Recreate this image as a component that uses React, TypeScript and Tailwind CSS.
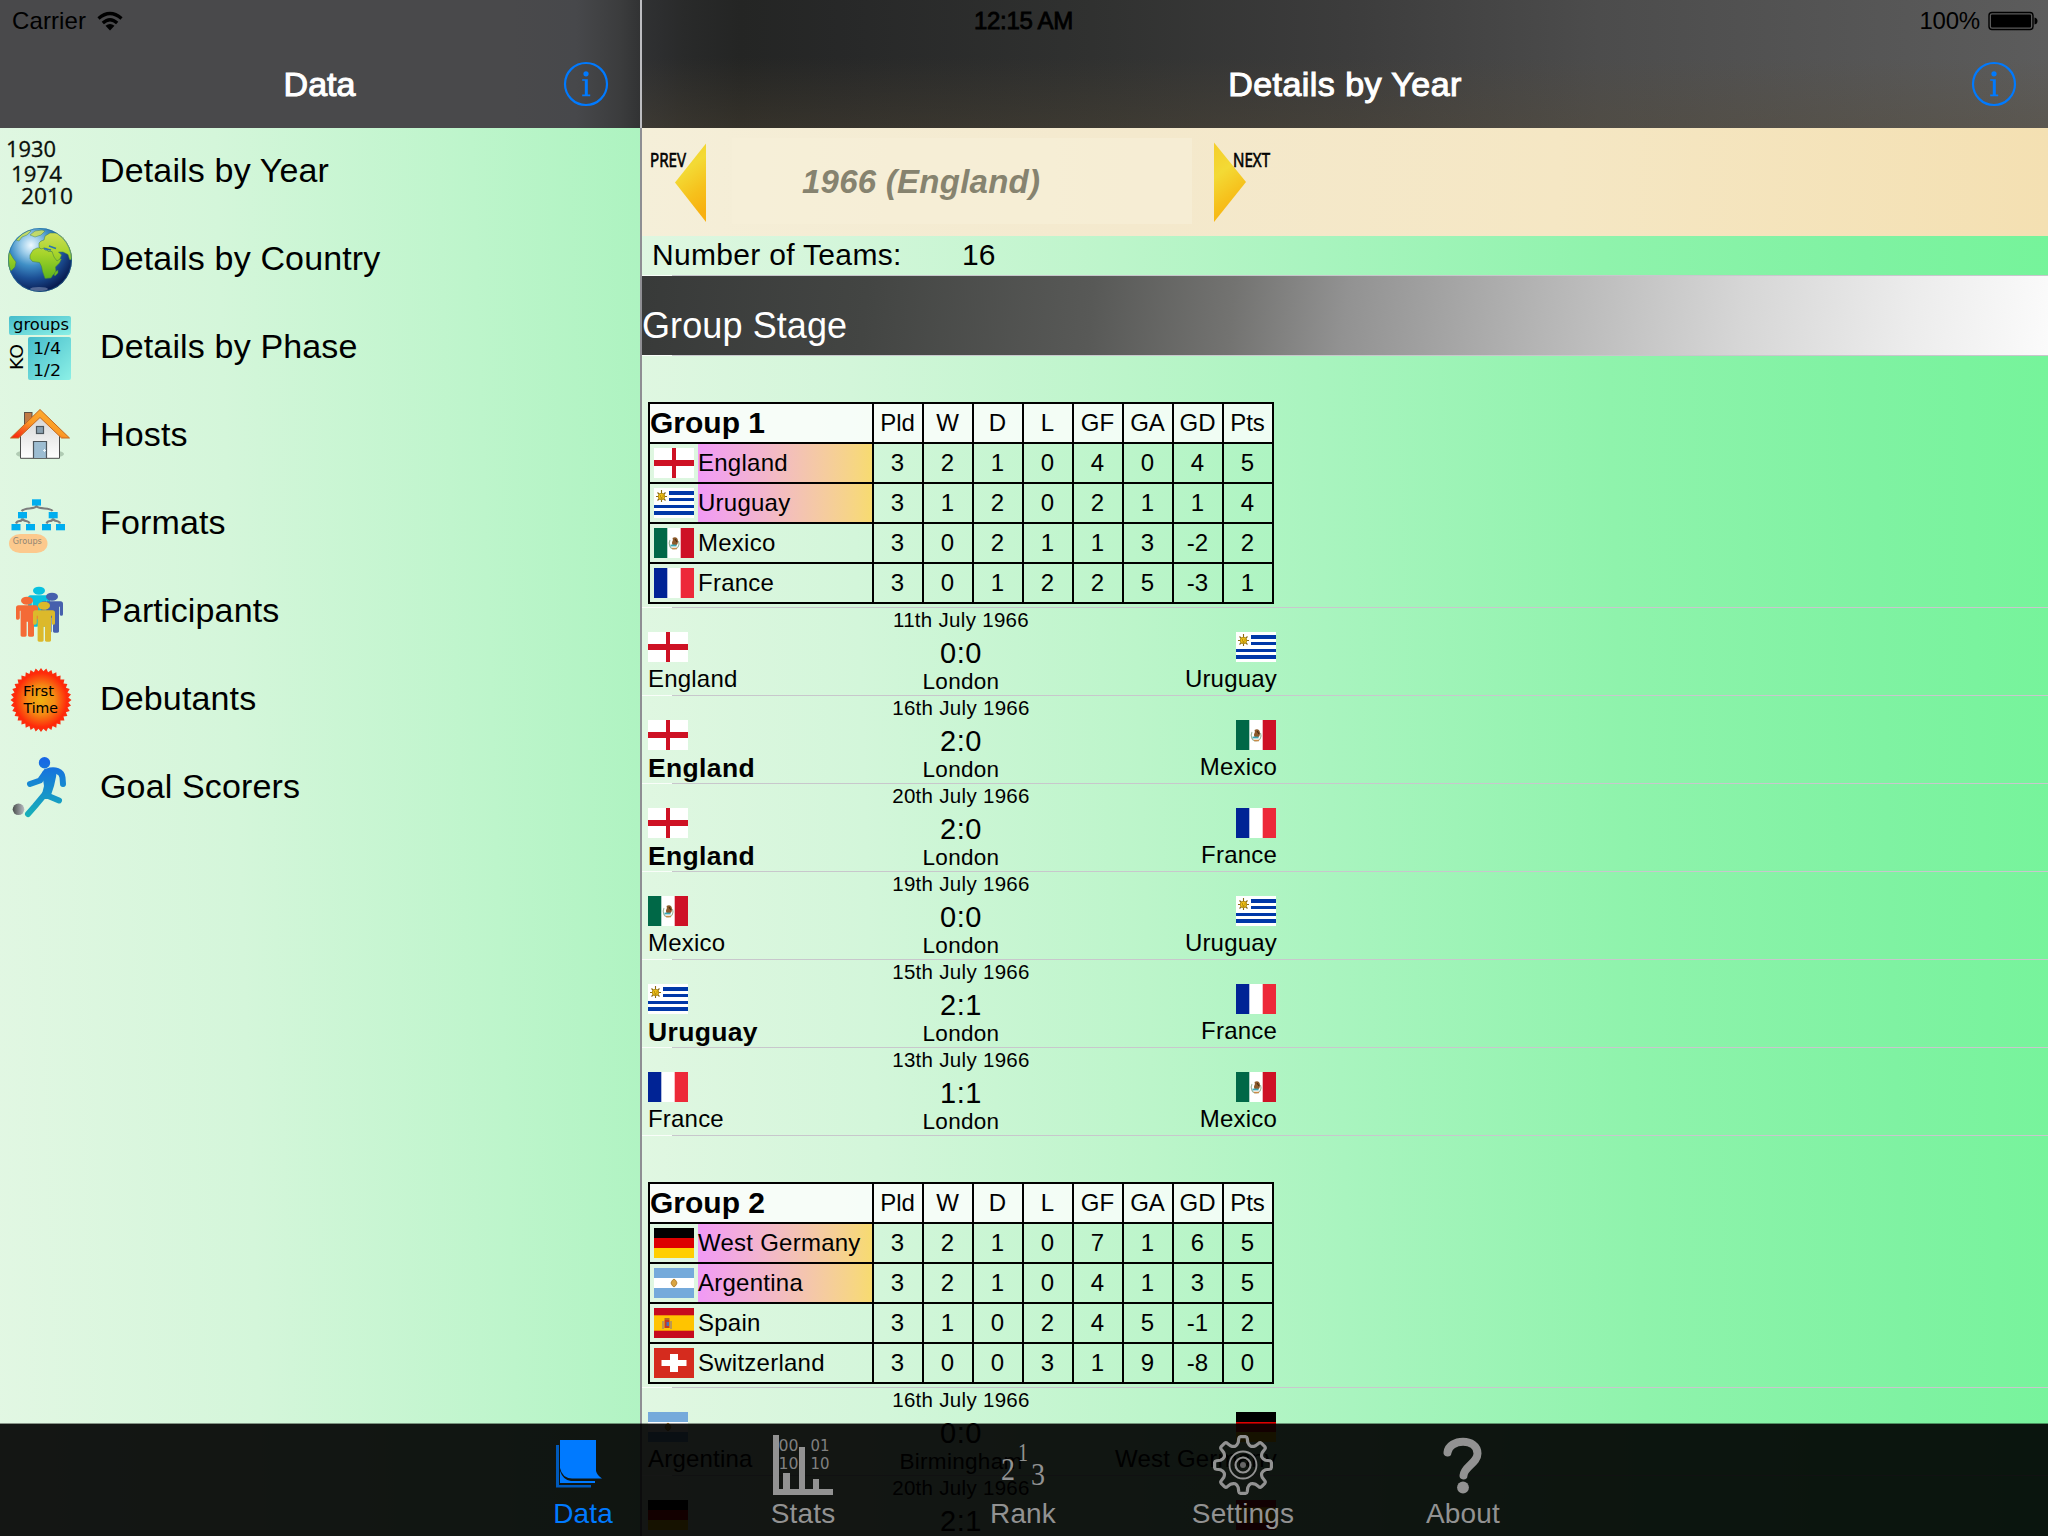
import React from "react";

type Country =
  | "England" | "Uruguay" | "Mexico" | "France"
  | "West Germany" | "Argentina" | "Spain" | "Switzerland";

function Flag({ country }: { country: Country }) {
  return (
    <svg viewBox="0 0 40 30" className="block h-[30px] w-10 shrink-0">
      {country === "England" && (
        <>
          <rect width="40" height="30" fill="#fff" />
          <rect y="12" width="40" height="6" fill="#ce1124" />
          <rect x="18" width="4" height="30" fill="#ce1124" />
        </>
      )}
      {country === "Uruguay" && (
        <>
          <rect width="40" height="30" fill="#fff" />
          <rect x="15" y="3" width="25" height="4" fill="#0038a8" />
          <rect x="15" y="10" width="25" height="3" fill="#0038a8" />
          <rect y="17" width="40" height="3" fill="#0038a8" />
          <rect y="23" width="40" height="4" fill="#0038a8" />
          <path d="M7.500 2v12M2 8.500h11M3.500 4.500l8 8M11.500 4.500l-8 8" stroke="#8a6a10" strokeWidth="1.100" />
          <circle cx="7.500" cy="8.500" r="3.300" fill="#f0c015" stroke="#9a7608" strokeWidth=".7" />
          <path d="M6 8h1M8.500 8h1M6.500 10h2" stroke="#6b4e05" strokeWidth=".8" />
        </>
      )}
      {country === "Mexico" && (
        <>
          <rect width="40" height="30" fill="#fff" />
          <rect width="13.300" height="30" fill="#006847" />
          <rect x="26.700" width="13.300" height="30" fill="#ce1126" />
          <path d="M18.500 10c3-2 5.500 0 5.500 3s-1 4-3 5c-2 0-3-1-3-3s1.500-2 .5-5z" fill="#8c5a2b" />
          <path d="M16 12c-2 4 0 9 4 9s6-4 4.500-8" stroke="#9db59a" strokeWidth="1.100" fill="none" />
          <path d="M16.500 17.500h6" stroke="#3aa7b5" strokeWidth="1.800" />
          <path d="M18 20.500h5" stroke="#c98b4a" strokeWidth="1.500" />
          <path d="M21 11l2 3" stroke="#4a2a12" strokeWidth="1.200" />
        </>
      )}
      {country === "France" && (
        <>
          <rect width="40" height="30" fill="#fff" />
          <rect width="13.300" height="30" fill="#002395" />
          <rect x="26.700" width="13.300" height="30" fill="#ed2939" />
        </>
      )}
      {country === "West Germany" && (
        <>
          <rect width="40" height="10" fill="#000" />
          <rect y="10" width="40" height="10" fill="#d00" />
          <rect y="20" width="40" height="10" fill="#ffce00" />
        </>
      )}
      {country === "Argentina" && (
        <>
          <rect width="40" height="30" fill="#75aadb" />
          <rect y="10" width="40" height="10" fill="#fff" />
          <path d="M20 11l1.800 1.500 1.200 2.500-1.200 2.500-1.800 1.500-1.800-1.500-1.200-2.500 1.200-2.500z" fill="#d9a441" stroke="#a8741f" strokeWidth=".8" />
        </>
      )}
      {country === "Spain" && (
        <>
          <rect width="40" height="30" fill="#c60b1e" />
          <rect y="7.300" width="40" height="15.400" fill="#ffc400" />
          <rect x="10.500" y="12" width="5" height="8" fill="#c0392b" />
          <rect x="12.500" y="14" width="2.500" height="4" fill="#4b6fb5" />
          <path d="M9 13v8M17 13v8" stroke="#a98a6a" strokeWidth="1.500" />
          <path d="M10.500 11h5" stroke="#a0522d" strokeWidth="1.600" />
        </>
      )}
      {country === "Switzerland" && (
        <>
          <rect width="40" height="30" fill="#d52b1e" />
          <rect x="16" y="6" width="8" height="18" fill="#fff" />
          <rect x="7.500" y="12" width="25" height="6" fill="#fff" />
        </>
      )}
    </svg>
  );
}

function InfoIcon() {
  return (
    <svg viewBox="0 0 46 46" className="block size-[46px]" fill="none">
      <circle cx="23" cy="23" r="21" stroke="#007aff" strokeWidth="2.200" />
      <circle cx="23" cy="12.800" r="2.600" fill="#007aff" />
      <path d="M19.200 18.200h5.600v15.400h2.400v1.600h-8v-1.600h2.600V19.800h-2.600z" fill="#007aff" />
    </svg>
  );
}

const rowIcon = "block h-[88px] w-20 shrink-0";

function YearsIcon() {
  return (
    <svg viewBox="0 0 80 88" className={rowIcon} fontFamily="'Open Sans', sans-serif" fontSize="22" fill="#0a0f0a" stroke="#0a0f0a" strokeWidth=".3">
      <text x="6" y="29" textLength="50" lengthAdjust="spacingAndGlyphs">1930</text>
      <text x="11" y="54" textLength="51" lengthAdjust="spacingAndGlyphs">1974</text>
      <text x="21" y="76" textLength="52" lengthAdjust="spacingAndGlyphs">2010</text>
    </svg>
  );
}

function GlobeIcon() {
  return (
    <svg viewBox="0 0 80 88" className={rowIcon}>
      <defs>
        <radialGradient id="sea" cx=".36" cy=".27" r=".76">
          <stop offset="0" stopColor="#eef9ff" />
          <stop offset=".2" stopColor="#9dcdea" />
          <stop offset=".42" stopColor="#3f8fc6" />
          <stop offset=".68" stopColor="#1c4f95" />
          <stop offset="1" stopColor="#06164a" />
        </radialGradient>
        <linearGradient id="land" gradientUnits="userSpaceOnUse" x1="0" y1="14" x2="0" y2="62">
          <stop offset="0" stopColor="#d3e05c" />
          <stop offset=".5" stopColor="#a6d42a" />
          <stop offset="1" stopColor="#5fb51c" />
        </linearGradient>
        <clipPath id="ball"><circle cx="40" cy="44" r="32" /></clipPath>
      </defs>
      <circle cx="40" cy="44" r="32" fill="url(#sea)" />
      <g clipPath="url(#ball)" fill="url(#land)" stroke="#3f7a4a" strokeWidth=".5">
        <path d="M30 39l3-5 4-2 6-.5 2 2.500 7 1 3 5 2 3 4.500 0-2 4-4 4 .5 5-3 3-2 3-6 .5-2.500-7-1-5-2-4-7-1-2.500-3z" />
        <path d="M39 27l2-2 3-1 1-4 5-3 8 0 8 6 5 8 1.500 8-1 5-2-.5-1.500-5-5-2.500-4.500 0 3 3-1.500 4-3 2-3-4-2-5.500-4 0-1-3-3-.5-3 1-2-2z" />
        <path d="M8 34l2 3 3 5 3 4-1 5-4 4-3-2z" />
        <path d="M16 24l6-6 7-4 2 1-4 4-5 2-3 4z" opacity=".85" />
        <path d="M30 19l5-4 7-1 3 1-4 4-6 2z" opacity=".85" />
        <path d="M54 59l1-3 3-2 0 3-3 3z" />
      </g>
      <path d="M44 32.500l7 1.500M49 30l7 2.500" stroke="#2d75ad" strokeWidth="1.600" />
      <ellipse cx="39" cy="73" rx="9" ry="2" fill="#8c9cc0" opacity=".55" />
      <circle cx="40" cy="44" r="31.500" fill="none" stroke="#1f6f9c" strokeWidth="1" opacity=".6" />
    </svg>
  );
}

function PhaseIcon() {
  return (
    <svg viewBox="0 0 80 88" className={rowIcon} fontFamily="'DejaVu Sans', sans-serif" fontSize="16">
      <defs>
        <linearGradient id="teal" x1="0" y1="0" x2="1" y2="1">
          <stop offset="0" stopColor="#45bccb" />
          <stop offset="1" stopColor="#8cf0e6" />
        </linearGradient>
      </defs>
      <rect x="9" y="12" width="62" height="19" rx="2" fill="url(#teal)" />
      <rect x="28" y="33" width="43" height="43" rx="2" fill="url(#teal)" />
      <text x="13" y="25.500" textLength="56" lengthAdjust="spacingAndGlyphs">groups</text>
      <text x="33" y="50" textLength="28" lengthAdjust="spacingAndGlyphs">1/4</text>
      <text x="33" y="72" textLength="28" lengthAdjust="spacingAndGlyphs">1/2</text>
      <text transform="translate(23 66) rotate(-90)" fontSize="18" textLength="26" lengthAdjust="spacingAndGlyphs">KO</text>
    </svg>
  );
}

function HouseIcon() {
  return (
    <svg viewBox="0 0 80 88" className={rowIcon}>
      <defs>
        <linearGradient id="roof" x1="0" y1="1" x2=".8" y2="0">
          <stop offset="0" stopColor="#ff1a08" />
          <stop offset=".22" stopColor="#f6501d" />
          <stop offset=".5" stopColor="#fb9a26" />
          <stop offset="1" stopColor="#ffb02e" />
        </linearGradient>
        <linearGradient id="wall" x1="0" y1="0" x2="0" y2="1">
          <stop offset="0" stopColor="#d4d4d4" />
          <stop offset="1" stopColor="#ffffff" />
        </linearGradient>
      </defs>
      <ellipse cx="40" cy="62" rx="24" ry="5" fill="#5c7c62" opacity=".35" />
      <rect x="24.500" y="20.500" width="7.500" height="14" fill="#c17a45" stroke="#5f5145" />
      <path d="M20.500 66.300V42L40 23l19.500 19v24.300z" fill="url(#wall)" stroke="#4c4c4c" />
      <path d="M10.500 46L40 17.500 69.500 46h-8L40 25.500 18.500 46z" fill="url(#roof)" stroke="#c56a20" strokeWidth="1" strokeLinejoin="round" />
      <rect x="36.500" y="34.500" width="7" height="7" fill="#8aa0b0" stroke="#4c555c" strokeWidth="1.200" />
      <path d="M33.500 66V49.500h13V66" fill="#9dbdd2" stroke="#4c555c" strokeWidth="1.200" />
      <path d="M44.500 57v3M43 58.500h3" stroke="#eaf4fa" />
    </svg>
  );
}

function FormatsIcon() {
  const boxes = [[32, 19.300, 9], [18, 32, 9], [48.700, 32, 9], [11.500, 44, 9], [26, 44, 9], [42, 44, 9], [56, 44, 9]];
  return (
    <svg viewBox="0 0 80 88" className={rowIcon}>
      <path d="M21.500 31q2-2 8-2.500t7-2.500q1 2 8 2.500t8 2.500M16 43.500q1-2.500 3.500-2.500t3-2.500q.5 2 3.500 2.500t3.500 2.500M46.500 43.500q1-2.500 3.500-2.500t3-2.500q.5 2 3.500 2.500t3.500 2.500" fill="none" stroke="#7d7d7d" strokeWidth="2.200" />
      {boxes.map(([x, y, w], i) => (
        <rect key={i} x={x} y={y} width={w} height="6.300" fill="#00aeef" />
      ))}
      <rect x="9" y="54" width="38.500" height="19" rx="11" ry="9.500" fill="#fcc98d" />
      <text x="12.800" y="63.500" fontSize="8" fill="#8f8574" fontFamily="'DejaVu Sans', sans-serif" textLength="29" lengthAdjust="spacingAndGlyphs">Groups</text>
    </svg>
  );
}

function Person({ x, y, fill }: { x: number; y: number; fill: string }) {
  return (
    <g transform={`translate(${x} ${y})`} fill={fill}>
      <ellipse cx="11" cy="0" rx="6" ry="4" />
      <path d="M2.500 4.500h17q2.500 0 2.500 2.500v10.500q0 1.500-1.600 1.500t-1.600-1.500V10h-.8v24.500q0 1.500-3 1.500t-3-1.500V21h-1.400v13.500q0 1.500-3 1.500t-3-1.500V10h-.8v7.500Q3.200 19 1.600 19T0 17.500V7q0-2.500 2.500-2.500z" />
    </g>
  );
}

function PeopleIcon() {
  return (
    <svg viewBox="0 0 80 88" className={rowIcon}>
      <Person x={28} y={22.700} fill="#08c2e0" />
      <Person x={41} y={28.700} fill="#4660ad" />
      <Person x={16} y={32.700} fill="#f46a36" />
      <Person x={33} y={37.700} fill="#dcb92b" />
    </svg>
  );
}

function BurstIcon() {
  const n = 36;
  const points = Array.from({ length: n * 2 }, (_, i) => {
    const k = i % 2 ? 0.9 : 1;
    const a = (i * Math.PI) / n;
    return `${(41 + 30.500 * k * Math.sin(a)).toFixed(1)},${(44 - 32 * k * Math.cos(a)).toFixed(1)}`;
  }).join(" ");
  return (
    <svg viewBox="0 0 80 88" className={rowIcon} fontFamily="'DejaVu Sans', sans-serif" fontSize="14">
      <defs>
        <radialGradient id="burst">
          <stop offset="0" stopColor="#f0b012" />
          <stop offset=".45" stopColor="#f48a14" />
          <stop offset=".85" stopColor="#ff2a0a" />
          <stop offset="1" stopColor="#f83010" />
        </radialGradient>
      </defs>
      <polygon points={points} fill="url(#burst)" />
      <text x="23" y="40" textLength="31" lengthAdjust="spacingAndGlyphs">First</text>
      <text x="23.500" y="57" textLength="34.500" lengthAdjust="spacingAndGlyphs">Time</text>
    </svg>
  );
}

function PlayerIcon() {
  return (
    <svg viewBox="0 0 80 88" className={rowIcon}>
      <defs>
        <linearGradient id="kit" gradientUnits="userSpaceOnUse" x1="0" y1="14" x2="0" y2="72">
          <stop offset="0" stopColor="#1766e6" />
          <stop offset="1" stopColor="#17b0b8" />
        </linearGradient>
        <linearGradient id="football">
          <stop offset="0" stopColor="#4a4f4d" />
          <stop offset="1" stopColor="#b9bcc2" />
        </linearGradient>
      </defs>
      <circle cx="44.500" cy="18.700" r="5.700" fill="url(#kit)" />
      <g fill="none" stroke="url(#kit)" strokeWidth="6" strokeLinecap="round" strokeLinejoin="round">
        <path d="M47 27.500c8-3 15 0 15.500 6l.5 6.500" />
        <path d="M46 28l-6 8.500-10 3.500" />
        <path d="M46 51l13 5.500" />
        <path d="M45 50L35 62 28 70" />
      </g>
      <path d="M42 28l6-3h9l-1 8-2 9-3 9-3 4-5 0-1-5 2-8z" fill="url(#kit)" />
      <circle cx="18.500" cy="65.300" r="5.800" fill="url(#football)" />
    </svg>
  );
}

const menu = [
  { label: "Details by Year", Icon: YearsIcon },
  { label: "Details by Country", Icon: GlobeIcon },
  { label: "Details by Phase", Icon: PhaseIcon },
  { label: "Hosts", Icon: HouseIcon },
  { label: "Formats", Icon: FormatsIcon },
  { label: "Participants", Icon: PeopleIcon },
  { label: "Debutants", Icon: BurstIcon },
  { label: "Goal Scorers", Icon: PlayerIcon },
];

type Standing = [Country, number[], boolean];
const group1: Standing[] = [
  ["England", [3, 2, 1, 0, 4, 0, 4, 5], true],
  ["Uruguay", [3, 1, 2, 0, 2, 1, 1, 4], true],
  ["Mexico", [3, 0, 2, 1, 1, 3, -2, 2], false],
  ["France", [3, 0, 1, 2, 2, 5, -3, 1], false],
];
const group2: Standing[] = [
  ["West Germany", [3, 2, 1, 0, 7, 1, 6, 5], true],
  ["Argentina", [3, 2, 1, 0, 4, 1, 3, 5], true],
  ["Spain", [3, 1, 0, 2, 4, 5, -1, 2], false],
  ["Switzerland", [3, 0, 0, 3, 1, 9, -8, 0], false],
];

function Separator() {
  return (
    <div className="flex h-px shrink-0">
      <div className="w-[30px] bg-white/80" />
      <div className="grow bg-[#c8c7cc]" />
    </div>
  );
}

function GroupTable({ name, rows }: { name: string; rows: Standing[] }) {
  return (
    <>
      <div className="flex h-[251px] shrink-0 flex-col pl-[6px] pt-[46px]">
        <div className="w-[626px] border-2 border-black text-[24px]">
          <div className="grid h-[38px] grid-cols-[222px_repeat(8,1fr)] bg-white/80 leading-[38px]">
            <div className="text-[30px] font-bold">{name}</div>
            {["Pld", "W", "D", "L", "GF", "GA", "GD", "Pts"].map((h) => (
              <div key={h} className="border-l-2 border-black pr-px text-center">{h}</div>
            ))}
          </div>
          {rows.map(([country, values, through]) => (
            <div key={country} className="grid h-10 grid-cols-[222px_repeat(8,1fr)] border-t-2 border-black leading-[38px]">
              <div className="flex tracking-[0.25px]">
                <div className="flex w-12 items-center pl-1"><Flag country={country} /></div>
                <div className={through ? "grow whitespace-nowrap bg-linear-to-r from-[#f199f6] to-[#f7db70]" : "grow whitespace-nowrap"}>
                  {country}
                </div>
              </div>
              {values.map((v, i) => (
                <div key={i} className="border-l-2 border-black pr-px text-center">{v}</div>
              ))}
            </div>
          ))}
        </div>
      </div>
      <Separator />
    </>
  );
}

function Team({ country, winner, right }: { country: Country; winner?: boolean; right?: boolean }) {
  return (
    <div className={right ? "flex w-[200px] flex-col items-end pr-[5px] pt-6" : "flex w-[200px] flex-col items-start pl-[6px] pt-6"}>
      <div className={right ? "pr-px" : ""}><Flag country={country} /></div>
      {winner ? (
        <div className="mt-1 h-[29px] overflow-hidden whitespace-nowrap text-[26.5px] font-bold leading-[28px] tracking-[0.35px]">{country}</div>
      ) : (
        <div className="mt-[3px] whitespace-nowrap text-[24px] leading-7 tracking-[0.2px]">{country}</div>
      )}
    </div>
  );
}

type MatchData = { date: string; home: Country; away: Country; score: string; city: string };

function Match({ date, home, away, score, city }: MatchData) {
  const [a, b] = score.split(":").map(Number);
  return (
    <>
      <div className="flex h-[87px] w-[640px] shrink-0 justify-between">
        <Team country={home} winner={a > b} />
        <div className="flex flex-col items-center pr-[2px]">
          <div className="text-[20.5px] leading-6 tracking-[0.3px]">{date}</div>
          <div className="mt-[6px] text-[29px] leading-[30px] tracking-[0.5px]">{score}</div>
          <div className="mt-[2px] text-[22.5px] leading-6 tracking-[0.3px]">{city}</div>
        </div>
        <Team country={away} winner={b > a} right />
      </div>
      <Separator />
    </>
  );
}

const matches1: MatchData[] = [
  { date: "11th July 1966", home: "England", away: "Uruguay", score: "0:0", city: "London" },
  { date: "16th July 1966", home: "England", away: "Mexico", score: "2:0", city: "London" },
  { date: "20th July 1966", home: "England", away: "France", score: "2:0", city: "London" },
  { date: "19th July 1966", home: "Mexico", away: "Uruguay", score: "0:0", city: "London" },
  { date: "15th July 1966", home: "Uruguay", away: "France", score: "2:1", city: "London" },
  { date: "13th July 1966", home: "France", away: "Mexico", score: "1:1", city: "London" },
];
const matches2: MatchData[] = [
  { date: "16th July 1966", home: "Argentina", away: "West Germany", score: "0:0", city: "Birmingham" },
  { date: "20th July 1966", home: "West Germany", away: "Spain", score: "2:1", city: "Birmingham" },
];

function ArrowLabel({ next }: { next?: boolean }) {
  const id = next ? "goldNext" : "goldPrev";
  return (
    <svg viewBox="0 0 60 84" className="block h-[84px] w-[60px] shrink-0" fontFamily="'Open Sans', sans-serif" fontSize="19.500" stroke="none">
      <defs>
        <linearGradient id={id} x1=".2" y1="0" x2=".5" y2="1">
          <stop offset="0" stopColor="#f5cf2b" />
          <stop offset=".35" stopColor="#f3da35" />
          <stop offset=".7" stopColor="#f6c11c" />
          <stop offset="1" stopColor="#f8b010" />
        </linearGradient>
      </defs>
      {next ? (
        <>
          <path d="M0 1.500L32 41 0 81z" fill={`url(#${id})`} />
          <text x="19" y="26" textLength="37" lengthAdjust="spacingAndGlyphs" stroke="#000" strokeWidth=".7">NEXT</text>
        </>
      ) : (
        <>
          <path d="M56 2.500L25 41.500 56 81z" fill={`url(#${id})`} />
          <text x="0" y="26" textLength="36" lengthAdjust="spacingAndGlyphs" stroke="#000" strokeWidth=".7">PREV</text>
        </>
      )}
    </svg>
  );
}

function DataIcon() {
  return (
    <svg viewBox="0 0 60 60" className="block size-[60px]">
      <path d="M3 10h3v40h32v2.500H3z" fill="#0059ba" />
      <path d="M7 36v12h35v-2H18q-8-1-11-10z" fill="#007aff" />
      <path d="M7 5h36v31q1 4 6 7.500H19Q9 43 7 33z" fill="#007aff" />
    </svg>
  );
}

function StatsIcon() {
  return (
    <svg viewBox="0 0 60 60" className="block size-[60px]" fill="#929292" fontFamily="'DejaVu Sans', sans-serif" fontSize="16">
      <path d="M0 0h6v54h54v6H0z" />
      <rect x="10" y="38" width="7" height="17" />
      <rect x="26" y="12" width="6" height="43" />
      <rect x="40" y="44" width="6" height="11" />
      <g fill="#808080">
        <text x="5.500" y="16" textLength="20" lengthAdjust="spacingAndGlyphs">00</text>
        <text x="5.500" y="34" textLength="20" lengthAdjust="spacingAndGlyphs">10</text>
        <text x="37.500" y="16" textLength="19" lengthAdjust="spacingAndGlyphs">01</text>
        <text x="37.500" y="34" textLength="19" lengthAdjust="spacingAndGlyphs">10</text>
      </g>
    </svg>
  );
}

function RankIcon() {
  return (
    <svg viewBox="0 0 60 60" className="block size-[60px]" fill="#929292" fontFamily="'Liberation Serif', serif">
      <text x="8" y="45" fontSize="31" textLength="14" lengthAdjust="spacingAndGlyphs">2</text>
      <text x="25" y="26" fontSize="26" textLength="10" lengthAdjust="spacingAndGlyphs">1</text>
      <text x="38" y="50" fontSize="31" textLength="14" lengthAdjust="spacingAndGlyphs">3</text>
    </svg>
  );
}

function GearIcon() {
  const outline = Array.from({ length: 8 }, (_, i) => {
    const pt = (r: number, deg: number) => {
      const a = ((i * 45 + deg - 90) * Math.PI) / 180;
      return `${(30 + r * Math.cos(a)).toFixed(2)} ${(30 + r * Math.sin(a)).toFixed(2)}`;
    };
    return `${i ? "L" : "M"}${pt(23, -12)}L${pt(27, -9)}Q${pt(28.500, -8)} ${pt(28.500, -5)}L${pt(28.500, 5)}Q${pt(28.500, 8)} ${pt(27, 9)}L${pt(23, 12)}Q${pt(18.200, 22.500)} ${pt(23, 33)}`;
  }).join("");
  return (
    <svg viewBox="0 0 60 60" className="block size-[60px]" fill="none" stroke="#929292">
      <path d={`${outline}Z`} strokeWidth="3.200" strokeLinejoin="round" />
      <circle cx="30" cy="30" r="13.500" strokeWidth="1.800" />
      <circle cx="30" cy="30" r="7.500" strokeWidth="2.200" />
      <circle cx="30" cy="30" r="3" fill="#666" stroke="none" />
    </svg>
  );
}

function QuestionIcon() {
  return (
    <svg viewBox="0 0 60 60" className="block size-[60px]" fill="none" stroke="#929292" strokeLinecap="round">
      <path d="M14.500 17.500C16 3.500 44.500 2.500 44.500 18.500c0 9.500-13.500 13-14 22" strokeWidth="8" />
      <circle cx="30" cy="52.500" r="5.900" fill="#929292" stroke="none" />
    </svg>
  );
}

const tabs = [
  { label: "Data", Icon: DataIcon, active: true },
  { label: "Stats", Icon: StatsIcon },
  { label: "Rank", Icon: RankIcon },
  { label: "Settings", Icon: GearIcon },
  { label: "About", Icon: QuestionIcon },
];

export default function App() {
  return (
    <div className="relative flex h-[1536px] w-[2048px] overflow-hidden bg-white font-['Liberation_Sans',Arial,sans-serif] text-black">
      <aside className="flex w-[640px] shrink-0 flex-col bg-[linear-gradient(88deg,#e2f7e3_0%,#d4f6da_38%,#bdf5cb_75%,#adf3c0_100%)]">
        <header className="flex h-32 shrink-0 flex-col bg-[linear-gradient(90deg,#49494b_0%,#49494b_80%,#47484b_90%,#3b3c3d_97%,#323334_100%)]">
          <div className="flex h-10 items-center gap-[11px] pl-3 pt-[2px] text-[24px] leading-none">
            <span className="tracking-[0.1px]">Carrier</span>
            <svg viewBox="0 0 26 20" className="block h-5 w-[26px]" fill="none" stroke="#000" strokeWidth="3.300">
              <path d="M1.500 7.500Q13-2.500 24.500 7.500" />
              <path d="M5.800 12Q13 5.300 20.200 12" />
              <path d="M13 19.500l-4.500-4.800q4.500-3.600 9 0z" fill="#000" stroke="none" />
            </svg>
          </div>
          <div className="grid h-[88px] grid-cols-[1fr_auto_1fr] items-center">
            <div />
            <h1 className="pr-px text-[34px] leading-[88px] text-white [-webkit-text-stroke:1.1px_white]">Data</h1>
            <div className="flex justify-end pr-[31px]"><InfoIcon /></div>
          </div>
        </header>
        <nav>
          {menu.map(({ label, Icon }) => (
            <div key={label} className="flex h-[88px] items-center">
              <Icon />
              <span className="pb-[5px] pl-5 text-[34px] leading-10 tracking-[0.15px]">{label}</span>
            </div>
          ))}
        </nav>
      </aside>

      <div className="flex w-[2px] shrink-0 flex-col">
        <div className="h-32 bg-[#bdbdc1]" />
        <div className="grow bg-[#8e8e93]" />
      </div>

      <main className="flex w-[1406px] shrink-0 flex-col bg-[linear-gradient(88deg,#e1f7e2_0%,#d3f6da_17%,#bcf5ca_36%,#a9f4bf_49%,#8ff3ac_69%,#7ff2a2_87%,#75f49a_100%)]">
        <header className="flex h-32 shrink-0 flex-col bg-[linear-gradient(180deg,transparent_45%,rgba(88,76,54,0.32)_100%),linear-gradient(90deg,#303133_0%,#292a2a_3%,#242524_7%,#272828_14%,#303130_32%,#3c3c3c_50%,#4c4c4c_68%,#5c5c5c_100%)]">
          <div className="flex h-10 items-center justify-between pl-[332px] pr-[10px] pt-[2px] text-[24px] leading-none">
            <span className="tracking-[-0.3px] [-webkit-text-stroke:0.8px_black]">12:15 AM</span>
            <div className="flex items-center gap-2">
              <span className="tracking-[-0.2px]">100%</span>
              <svg viewBox="0 0 50 20" className="block h-5 w-[50px]">
                <rect x="1" y="1.500" width="44" height="17" rx="3" fill="none" stroke="#000" strokeWidth="1.400" />
                <rect x="3" y="3.500" width="40" height="13" rx="1" />
                <path d="M46.500 6.500q3 .5 3 3.500t-3 3.500z" />
              </svg>
            </div>
          </div>
          <div className="grid h-[88px] grid-cols-[1fr_auto_1fr] items-center">
            <div />
            <h1 className="text-[34px] leading-[88px] tracking-[0.45px] text-white [-webkit-text-stroke:1.1px_white]">Details by Year</h1>
            <div className="flex justify-end pr-[31px]"><InfoIcon /></div>
          </div>
        </header>

        <section className="flex h-[108px] shrink-0 bg-[linear-gradient(92deg,#f5efd9_0%,#f4e9cd_35%,#f5e7c4_65%,#f4e0b2_100%)] pl-2">
          <div className="pt-[13px]"><ArrowLabel /></div>
          <div className="ml-[22px] mt-[10px] h-[86px] w-[460px] bg-[#f7f0d8]/60 pl-[70px] text-[33px] font-bold italic leading-[88px] tracking-[0.25px] text-[#86836f]">
            1966 (England)
          </div>
          <div className="ml-[22px] pt-[13px]"><ArrowLabel next /></div>
        </section>

        <section className="flex h-[39px] shrink-0 items-center pl-[10px] text-[30px] leading-[37px]">
          <span className="w-[310px] pb-[2px] tracking-[0.32px]">Number of Teams:</span>
          <span className="pb-[2px]">16</span>
        </section>
        <Separator />
        <section className="h-[79px] shrink-0 bg-[linear-gradient(96deg,#383a39_0%,#434543_16%,#585957_32%,#737371_42%,#929292_50%,#b5b5b5_64%,#d6d6d6_78%,#ececec_90%,#fbfbfb_100%)]">
          <h2 className="pt-[30px] text-[36px] leading-10 tracking-[0.1px] text-white">Group Stage</h2>
        </section>
        <Separator />

        <GroupTable name="Group 1" rows={group1} />
        {matches1.map((m) => <Match key={m.date} {...m} />)}
        <GroupTable name="Group 2" rows={group2} />
        {matches2.map((m) => <Match key={m.date} {...m} />)}
      </main>

      <div className="absolute inset-x-0 bottom-0 flex h-[113px] justify-center border-t border-black/40 bg-black/[0.915] bg-clip-padding pr-[2px]">
        {tabs.map(({ label, Icon, active }) => (
          <div key={label} className={active ? "flex w-[220px] flex-col items-center pt-[11px] text-[#007aff]" : "flex w-[220px] flex-col items-center pt-[11px] text-[#929292]"}>
            <Icon />
            <span className="mt-[3px] text-[28px] leading-8 tracking-[0.15px]">{label}</span>
          </div>
        ))}
      </div>
    </div>
  );
}
